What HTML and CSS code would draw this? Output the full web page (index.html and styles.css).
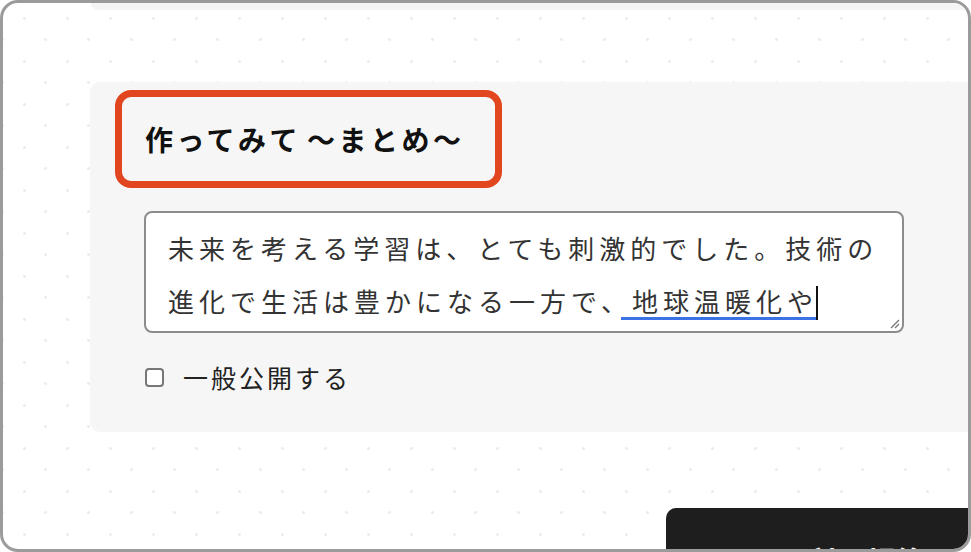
FILE: index.html
```html
<!DOCTYPE html>
<html lang="ja">
<head>
  <meta charset="UTF-8">
  <title>まとめ</title>
  <link rel="stylesheet" href="styles.css">
</head>
<body>
  <div class="frame">
    <div class="top-card"></div>

    <!-- まとめパネル -->
    <section class="panel">
      <div class="highlight">
        <h2 class="title">作ってみて 〜まとめ〜</h2>
      </div>

      <div class="memo">
        <p class="memo-text">未来を考える学習は、とても刺激的でした。技術の進化で生活は豊かになる一方で、<span class="composing">地球温暖化や</span><span class="caret"></span></p>
        <svg class="grip" width="12" height="12" viewBox="0 0 12 12">
          <path d="M11 3 L3 11 M11 7 L7 11" stroke="#777" stroke-width="1.3" fill="none"/>
        </svg>
      </div>

      <label class="public">
        <span class="check"></span>
        <span class="public-label">一般公開する</span>
      </label>
    </section>

    <div class="actions">
      <button class="btn-dark">利用規約に同意</button>
    </div>
  </div>
</body>
</html>
```

FILE: styles.css
```css
/* ベース */
* { margin: 0; padding: 0; box-sizing: border-box; }
html, body { background: #fff; }
body {
  font-family: "Noto Sans CJK JP", "Noto Sans", sans-serif;
  color: #222;
}

/* 外枠 */
.frame {
  width: 971px;
  height: 552px;
  border: 3px solid #9b9b9b;
  border-radius: 18px;
  overflow: hidden;
  background-color: #fff;
  background-image:
    radial-gradient(circle, #ececec 1.2px, transparent 1.6px),
    radial-gradient(circle, #ececec 1.2px, transparent 1.6px);
  background-size: 43px 43px;
  background-position: 0 -6px, 21px 15px;
}

.top-card {
  height: 7px;
  margin-left: 88px;
  margin-right: -20px;
  background: #f5f5f5;
  border-radius: 0 0 10px 10px;
}

/* パネル */
.panel {
  margin: 72px -20px 0 87px;
  height: 350px;
  padding: 8px 0 0 25px;
  background: #f6f6f6;
  border-radius: 10px;
}

.highlight {
  width: 387px;
  height: 98px;
  border: 7px solid #e1461f;
  border-radius: 16px;
  padding-left: 23px;
  display: flex;
  align-items: center;
}
.title {
  font-size: 28px;
  font-weight: 700;
  letter-spacing: 3.5px;
  word-spacing: -4px;
  color: #111;
}

/* 入力欄 */
.memo {
  position: relative;
  width: 760px;
  height: 122px;
  margin: 23px 0 0 29px;
  padding: 8px 16px 0 22px;
  background: #fff;
  border: 2px solid #8c8c8c;
  border-radius: 8px;
}
.memo-text {
  font-size: 26px;
  line-height: 53px;
  letter-spacing: 5px;
  color: #333;
}
.composing {
  padding: 0 0 1px 11px;
  margin-left: -11px;
  background: linear-gradient(#3b73e6, #3b73e6) left bottom / 100% 3px no-repeat;
}
.caret {
  display: inline-block;
  width: 2px;
  height: 34px;
  margin-left: -2px;
  background: #111;
  vertical-align: -8px;
}
.grip {
  position: absolute;
  right: 2px;
  bottom: 2px;
}

/* チェックボックス */
.public {
  display: flex;
  align-items: center;
  gap: 19px;
  margin: 26px 0 0 30px;
}
.check {
  width: 19px;
  height: 19px;
  border: 2px solid #777;
  border-radius: 4px;
  background: #fff;
}
.public-label {
  font-size: 25px;
  letter-spacing: 3px;
  color: #222;
}

/* ボタン */
.actions {
  margin: 76px -30px 0 663px;
}
.btn-dark {
  display: block;
  width: 100%;
  height: 90px;
  padding: 30px 0 0 140px;
  text-align: left;
  border: none;
  border-radius: 10px;
  background: #1e1e1e;
  color: #fff;
  font-family: inherit;
  font-size: 30px;
  font-weight: 700;
}
```
